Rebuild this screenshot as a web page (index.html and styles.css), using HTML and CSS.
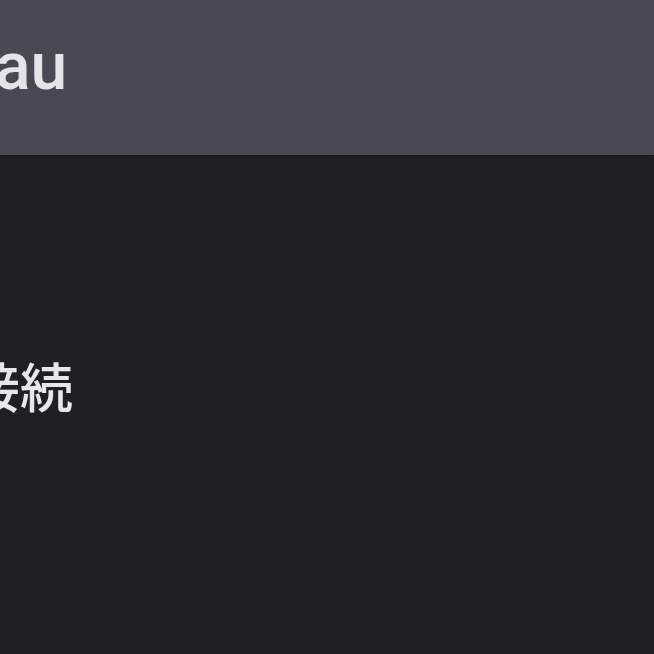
FILE: index.html
```html
<!DOCTYPE html>
<html lang="ja">
<head>
<meta charset="utf-8">
<link rel="stylesheet" href="styles.css">
</head>
<body>
<header class="topbar">
  <h1 class="title">au</h1>
</header>
<main class="content">
  <p class="label">接続</p>
</main>
</body>
</html>
```
FILE: styles.css
```css
html, body {
  margin: 0;
  padding: 0;
  height: 100%;
  overflow: hidden;
}
body {
  background: #1f2024;
  font-family: Roboto, "Noto Sans CJK JP", sans-serif;
  color: #e6e7ec;
}
.topbar {
  height: 155px;
  background: #474955;
  display: flex;
  align-items: flex-start;
  box-shadow: 0 1px 3px rgba(0,0,0,0.25);
  position: relative;
}
.title {
  margin: 34px 0 0 -5px;
  font-size: 66px;
  font-weight: 500;
  line-height: 1;
  color: #e4e5ea;
}
.content {
  padding-top: 204px;
}
.label {
  margin: 0 0 0 -33px;
  font-family: "Noto Sans CJK JP", sans-serif;
  font-size: 53px;
  font-weight: 500;
  line-height: 1;
  color: #e6e7ec;
}
```
